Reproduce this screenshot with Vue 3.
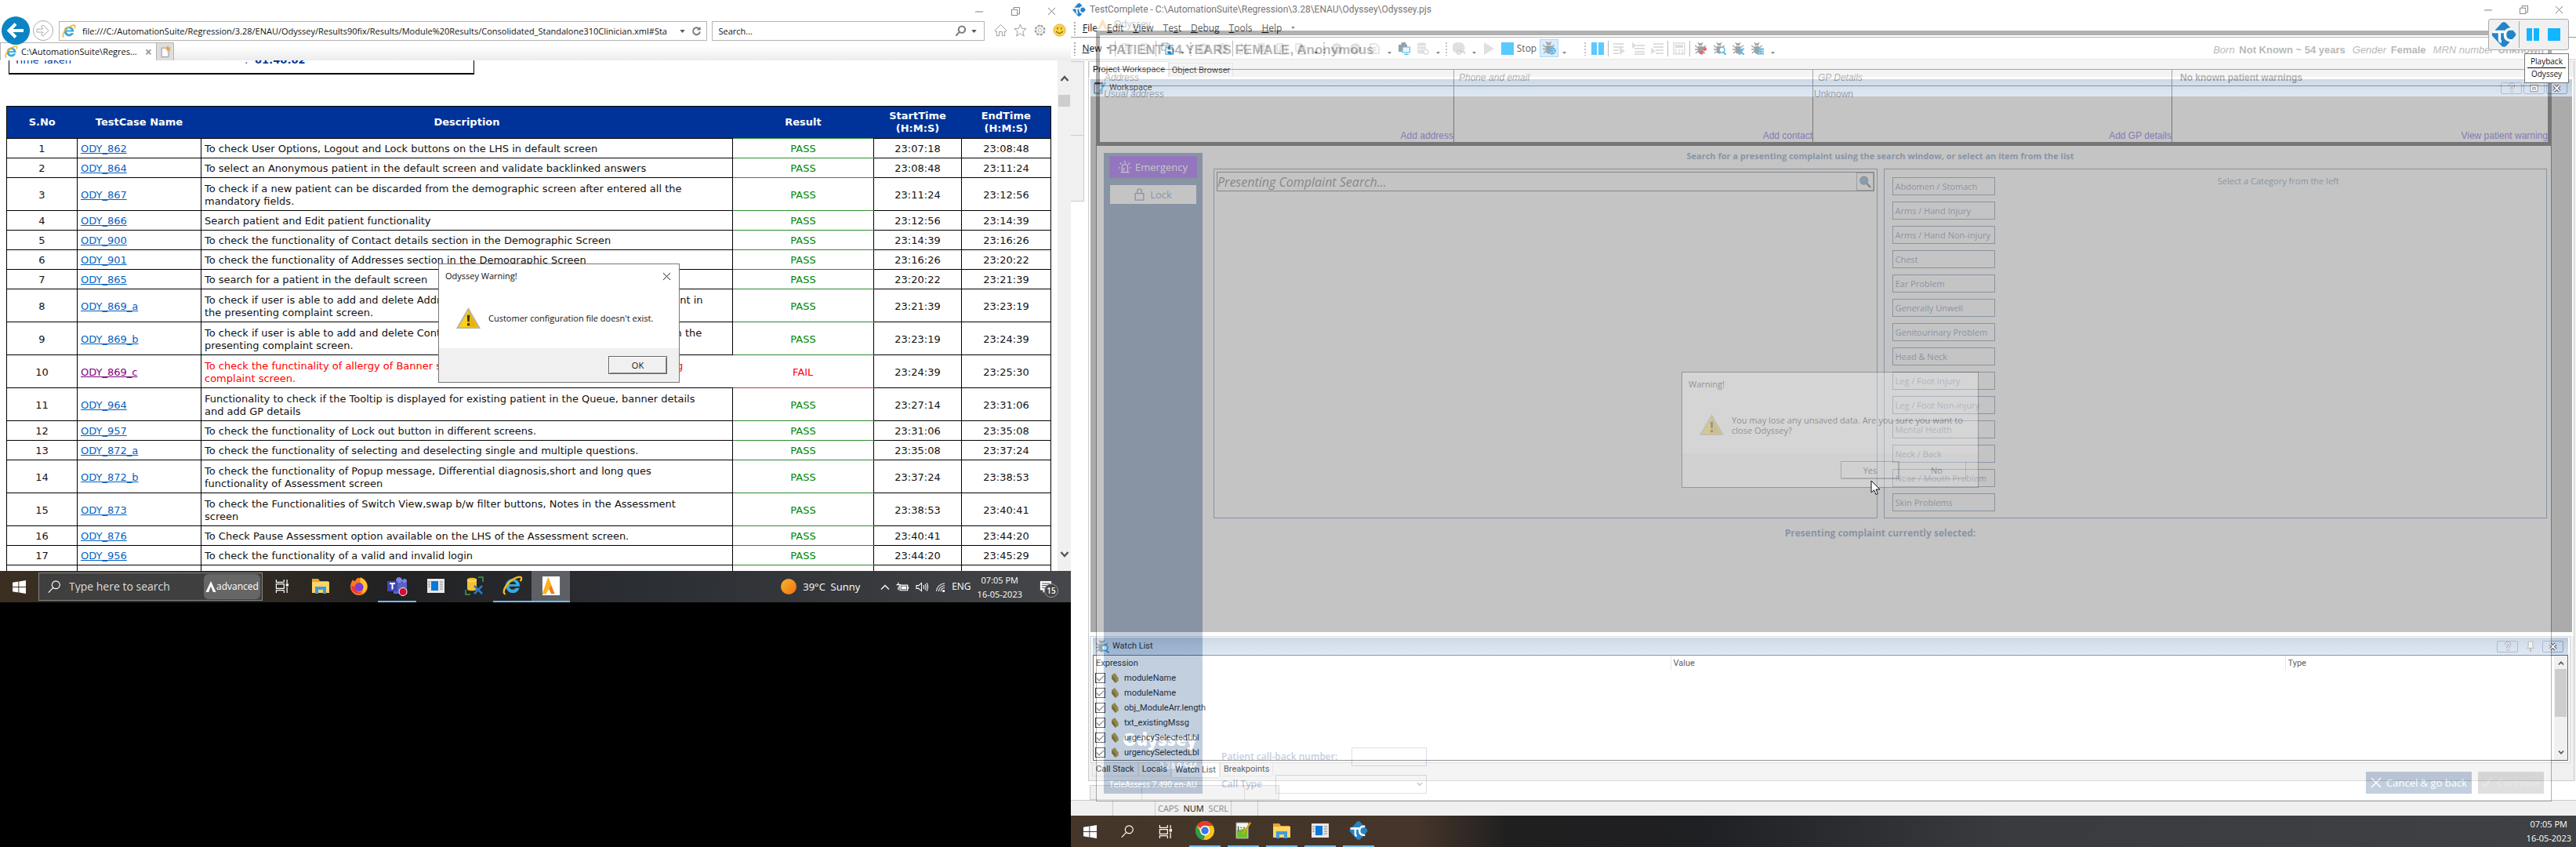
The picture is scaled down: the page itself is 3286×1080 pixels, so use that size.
<script setup>
import { h } from 'vue'

const icons = {
  min: ['0 0 12 12', ['M0 6.5H11', 'none', '#777']],
  restore: ['0 0 12 12', ['M0.5 3.5H8.5V11.5H0.5Z M3.5 3V0.5H11.5V9.5H9', 'none', '#777']],
  close: ['0 0 12 12', ['M1 1L11 11M11 1L1 11', 'none', '#777']],
  closeDark: ['0 0 12 12', ['M1 1L11 11M11 1L1 11', 'none', '#111']],
  ie: ['0 0 20 20',
    ['M10 3a7 7 0 1 0 6.7 9.2h-3.6a3.6 3.6 0 0 1-6.5-1.6H17A7 7 0 0 0 10 3zM6.7 8.4a3.4 3.4 0 0 1 6.6 0z', '#3aa9e0'],
    ['M3 18C0 18 1 12 6 7S18 0 18.5 2c.3 1-.3 2.400-1 3.500', 'none', '#f3b91c', 1.8]],
  refresh: ['0 0 14 14', ['M11 4.500A4.800 4.800 0 1 0 11.800 8', 'none', '#777', 2], ['M12.500 1V6H7.500Z', '#777']],
  lens: ['0 0 16 16', ['M9.500 1.500a4.500 4.500 0 1 0 .1 0zM6.500 9L1.500 14.500', 'none', '#777', 2]],
  lensWhite: ['0 0 20 20', ['M12.500 2a5.500 5.500 0 1 0 .1 0zM8.500 11.500L2 18.500', 'none', '#fff', 1.3]],
  lensBlue: ['0 0 20 20', ['M8.500 2.500a5.500 5.500 0 1 0 .1 0z', '#2f86c4', '#555', 1.500], ['M12.500 12L18 18', 'none', '#444', 3]],
  home: ['0 0 18 18', ['M1 9.500L9 1.500L17 9.500L15.500 11L14.500 10V16.500H11V11H7V16.500H3.500V10L2.500 11Z', '#fff', '#999']],
  star: ['0 0 18 18', ['M9 1L11.200 6.700L17 7L12.500 10.800L14 17L9 13.500L4 17L5.500 10.800L1 7L6.800 6.700Z', '#fff', '#999']],
  gear: ['0 0 18 18', ['M9 3.200a5.800 5.800 0 1 0 .1 0z', 'none', '#999', 3.200, '2.600 2'], ['M9 3.500a5.500 5.500 0 1 0 .1 0z', '#fff', '#999'], ['M9 6.500a2.500 2.500 0 1 0 .1 0z', '#fff', '#999']],
  smile: ['0 0 18 18', ['M9 1a8 8 0 1 0 .1 0z', '#fcd34a', '#e0ad2c'], ['M6.500 5V8M11.500 5V8M4.500 10.500Q9 16 13.500 10.500', 'none', '#7a5a10', 1.300]],
  newtab: ['0 0 16 18', ['M2.500 3.500H12.500V16.500H2.500Z', '#fff', '#888'], ['M12 0L13 3L16 2.500L14 5L15.500 7.500L12.500 7L11 9.500L10.500 6.500L8 5.500L10.500 4L10 1.500Z', '#f0a030']],
  up: ['0 0 12 8', ['M1.500 7L6 2L10.500 7', 'none', '#555', 2.400]],
  down: ['0 0 12 8', ['M1.500 1L6 6L10.500 1', 'none', '#555', 2.400]],
  caret: ['0 0 8 5', ['M0 0H8L4 5Z', '#555']],
  chevUp: ['0 0 12 8', ['M1 7L6 2L11 7', 'none', '#fff', 1.300]],
  warn: ['0 0 32 28', ['M16 1.500L30.500 26.500H1.500Z', '#f8d21c', '#b9b4a0', 2], ['M16 4L28 25H16Z', '#eab308'], ['M14.200 9.500H17.800L17.200 18.500H14.800ZM14.400 20.500H17.600V23.600H14.400Z', '#3c3010']],
  win: ['0 0 18 18', ['M0 2.800L7.800 1.700V8.500H0ZM8.800 1.500L18 0V8.500H8.800ZM0 9.500H7.800V16.300L0 15.200ZM8.800 9.500H18V18L8.800 16.500Z', '#fff']],
  tasks: ['0 0 18 18', ['M1.500 0V3.500H12M12 0V3.500M1.500 18V14.500H12M12 18V14.500M1.500 6H12V12H1.500ZM16 0V5M16 10V18', 'none', '#fff', 1.300], ['M14.500 5.500H18V9H14.500Z', '#fff']],
  folder: ['0 0 24 22', ['M1 2H9L11 5H22V20H1Z', '#e8a72a'], ['M1 6H23V20H1Z', '#fcd667'], ['M5 12H19V21H15V16H9V21H5Z', '#3d9ce0']],
  firefox: ['0 0 24 24', ['M12 2C18 1 23 7 23 13a11 11 0 0 1-22 0C1 9 3 6 4 4c1 2 2 2 3 2C8 3 11 1 12 2z', '#ff7a1a'], ['M14 1c5 3 9 7 8 13-1 5-4 7-7 8 4-5 3-12-2-15z', '#ffc830'], ['M12 8a5.500 5.500 0 1 0 .1 0z', '#7a40d8'], ['M2 12c0 8 8 12 14 9-5 0-10-3-9-8z', '#f0304a']],
  teams: ['0 0 26 26', ['M15 2a4 4 0 1 0 .1 0zM22 4a3 3 0 1 0 .1 0z', '#7b83eb'], ['M8 9H25V18a6 6 0 0 1-8 5H8Z', '#5a62c8'], ['M0 7H13V20H0Z', '#4048b0'], ['M3 10H10M6.500 10V17.500', 'none', '#fff', 2], ['M20 15.500a5 5 0 1 0 .1 0z', '#d01030', '#fff']],
  panel: ['0 0 22 18', ['M0 0H22V18H0Z', '#e8e8e8'], ['M5 3H14V15H5Z', '#0a78d6'], ['M1 4H4M1 7H4M1 10H4M16 4H20M16 7H20M16 10H20M16 13H20', 'none', '#888']],
  db: ['0 0 24 24', ['M3 4c0-3 12-3 12 0v12c0 3-12 3-12 0z', '#f2c230'], ['M3 4c0 3 12 3 12 0', 'none', '#fff0a0'], ['M12 12L22 22M22 12L12 22', 'none', '#2a7ac8', 2.500], ['M17 1H23V7M1 17V23H7', 'none', '#35a050', 1.500]],
  od: ['0 0 24 26', ['M0 0H24V26H0Z', '#fff'], ['M8 1L17 24H12L8 15L5 24H0Z', '#f07a1a'], ['M8 1L12 12L5 24H0Z', '#ffb020']],
  aGhost: ['0 0 16 16', ['M8 1L15 15H11L8 9L5 15H1Z', '#ff9a20']],
  advA: ['0 0 14 16', ['M7 0L14 15H10L7 7L4 15H0Z', '#fff']],
  batt: ['0 0 18 14', ['M5.500 4.500H15.500V11.500H5.500ZM3 1V5M0.500 4H5.500V6L3 8V11M16.500 6.500V9.500', 'none', '#fff', 1.300], ['M7 6H14V10H7Z', '#fff']],
  vol: ['0 0 18 14', ['M1 5H4L8 1.500V12.500L4 9H1ZM10.500 4.500Q12 7 10.500 9.500M12.800 3Q15 7 12.800 11M15 1.500Q18 7 15 12.500', 'none', '#fff', 1.100]],
  wifi: ['0 0 14 14', ['M1.500 13A12 12 0 0 1 13 2M4.500 13A9 9 0 0 1 13 5M7.500 13A6 6 0 0 1 13 8', 'none', '#ddd', 1.200], ['M10 11H13V14H10Z', '#fff']],
  note: ['0 0 18 18', ['M1 1H17V14H9L5 18V14H1Z', '#fff'], ['M3.500 4.500H14.500M3.500 7.500H14.500M3.500 10.500H11', 'none', '#333']],
  tc: ['0 0 32 32', ['M16 0Q17.500 0 19 1.500L30.500 14Q32 16 30.500 18L19 30.500Q16 33 13 30.500L1.500 18Q0 16 1.500 14L13 1.500Q14.500 0 16 0Z', '#2484c8'], ['M2 12.500H17M10.500 12.500V22Q10.500 25 13 25M27 9Q18 8 17.500 16T27 24', 'none', '#fff', 3.400]],
  chrome: ['0 0 24 24', ['M12 0a12 12 0 1 0 .1 0z', '#f9c51e'], ['M12 0A12 12 0 0 1 22.400 6H12L6.800 9L1.600 6A12 12 0 0 1 12 0z', '#e33b2e'], ['M1.600 6L7 15L12 18L10.500 24A12 12 0 0 1 1.600 6z', '#2f9e4a'], ['M12 6.500a5.500 5.500 0 1 0 .1 0z', '#3b78e7', '#fff', 1.500]],
  npp: ['0 0 22 24', ['M1 1H18V23H1Z', '#f4f6ee', '#777'], ['M2 12L17 8V22H2Z', '#6cc224'], ['M4 6V13M7 8H9M11 8H13', 'none', '#555', 1.500], ['M21 1L10 17', 'none', '#e0a020', 2.500]],
  siren: ['0 0 18 18', ['M3 16.500H15M5 16V9a4 4 0 0 1 8 0V16M9 0V3M2 3L4 5M16 3L14 5M0 10H2M16 10H18M7.500 14V10', 'none', '#fff', 1.500]],
  lock: ['0 0 14 18', ['M1 7.500H13V17H1ZM4 7V4a3 3 0 0 1 6 0V7', 'none', '#3a6297', 1.500]],
  workspace: ['0 0 16 16', ['M1 3H11V15H1Z', 'none', '#555'], ['M1 1H12V3H1Z', '#444'], ['M15 1L8 13', 'none', '#1f9be0', 2.200]],
  tag: ['0 0 10 14', ['M1 3L5 0L10 7V11L6 14L1 8Z', '#b8982a'], ['M1 3L6 9V14L1 8Z', '#8d7014']],
  pin: ['0 0 12 16', ['M3 1H9V8L11 10H1L3 8Z', '#eee', '#999'], ['M6 10V15', 'none', '#999', 2]],
  help: ['0 0 12 16', ['M3 5Q3 2 6 2T9 5Q9 7 6 8.500V10.500M6 12.500V14.500', 'none', '#667', 3.600], ['M3 5Q3 2 6 2T9 5Q9 7 6 8.500V10.500M6 12.500V14.500', 'none', '#fff', 1.500]],
  box: ['0 0 12 12', ['M1 1.500H11V10.500H1ZM4 5H8V7.500H4Z', '#fff', '#778', 1.200]],
  xb: ['0 0 12 12', ['M2 2L10 10M10 2L2 10', 'none', '#556', 4.200], ['M2 2L10 10M10 2L2 10', 'none', '#fff', 2]],
  x: ['0 0 14 14', ['M1 1L13 13M13 1L1 13', 'none', '#fff', 1.600]],
  tick: ['0 0 14 14', ['M1 8L5 12L13 1', 'none', '#bbb', 1.600]],
  cursor: ['0 0 13 20', ['M1 1V16L4.500 12.800L7 18.500L9.500 17.500L7 12H12Z', '#fff', '#111']],
  back: ['0 0 36 36', ['M18 0a18 18 0 1 0 .1 0z', '#0a84c4'], ['M28 18H10M18 9.500L9.500 18L18 26.500', 'none', '#fff', 4]],
  fwd: ['0 0 26 26', ['M13 .5a12.500 12.500 0 1 0 .1 0z', '#fff', '#aaa'], ['M5 11H13L10.500 7.500L13 6L20 13L13 20L10.500 18.500L13 15H5Z', '#fff', '#aaa']],
  save: ['0 0 16 16', ['M1 1H9L11 3V10H1ZM3 1V4H8V1', '#fff', '#777'], ['M6 6H14L15.500 7.500V15.500H6Z', '#fff', '#1f9be0', 1.500], ['M8 11H13V15H8ZM8 6H12V8.500H8Z', '#1f9be0']],
  shape: ['0 0 16 16', ['M3 2H10L14 6V14H3ZM6 7H11M6 10H11', 'none', '#cfcfcf', 1.500]],
  disc: ['0 0 16 16', ['M8 1a7 7 0 1 0 .1 0z', '#d6d6d6'], ['M8 5a3 3 0 1 0 .1 0z', '#f3f3f3']],
  cut: ['0 0 16 16', ['M4 1L10 11M11 1L5 11M4 11a2 2 0 1 0 .1 0zM11 11a2 2 0 1 0 .1 0z', 'none', '#cfcfcf', 1.500]],
  copy: ['0 0 16 16', ['M2 2H9V11H2ZM6 5H14V15H6Z', '#fff', '#cfcfcf', 1.500]],
  shot: ['0 0 16 16', ['M1 3H4L5 0H10L11 3H12V12H1Z', '#777'], ['M6 6H15.500V13H6ZM8 15.500H14M11 13V15', '#dff2ff', '#1f9be0', 1.200]],
  dbg: ['0 0 16 16', ['M1 2C1 0 12 0 12 2V13C12 15 1 15 1 13Z', '#d3d3d3'], ['M0 5H13M0 9H13', 'none', '#fff'], ['M12 9a3 3 0 1 0 .1 0z', '#fff', '#ccc', 1.500]],
  play: ['0 0 16 16', ['M2 0L15 8L2 16Z', '#d3d3d3']],
  rec: ['0 0 16 16', ['M8 0a7 7 0 0 0-5 13H12A7 7 0 0 0 8 0z', '#d3d3d3'], ['M8 10a2.500 2.500 0 1 0 .1 0zM11 12.500H16V15', 'none', '#bbb', 1.500]],
  stop: ['0 0 16 16', ['M0 0H16V16H0Z', '#12b5ff']],
  pause: ['0 0 16 16', ['M0 0H7V16H0ZM9 0H16V16H9Z', '#12b5ff']],
  stepA: ['0 0 16 16', ['M0 2H13M0 6H13M0 10H7M0 14H7', 'none', '#d0d0d0', 2], ['M8 6L15 11L8 16Z', '#d0d0d0']],
  stepB: ['0 0 16 16', ['M6 4H16M3 8H16M3 12H16M3 15H16', 'none', '#d0d0d0', 2], ['M0 0L6 4L0 8Z', '#d0d0d0']],
  stepC: ['0 0 16 16', ['M3 2H16M3 6H16M6 10H16M6 14H16', 'none', '#d0d0d0', 2], ['M0 7L6 11L0 15Z', '#d0d0d0']],
  calc: ['0 0 16 16', ['M1 1H15V15H1Z', '#fff', '#cfcfcf', 1.500], ['M3 3H13V7H3ZM3 9H5V11H3ZM7 9H9V11H7ZM11 9H13V11H11ZM3 12H5V14H3ZM7 12H9V14H7ZM11 12H13V14H11Z', '#cfcfcf']]
}
const bug = [['M4 5H10V13Q7 16 4 13ZM4.500 4Q4.500 1 7 1T9.500 4Z', '#777'], ['M0 4L4 7M0 9H14M1 14L4 11M14 4L10 7M10 11L13 14M4 0L5 2M10 0L9 2', 'none', '#777', 1.300]]
icons.bugRed = ['0 0 16 16', ...bug, ['M12.500 6a2.500 2.500 0 1 0 .1 0zM8.500 10.500a2.500 2.500 0 1 0 .1 0z', '#d8283c']]
icons.bugLens = ['0 0 16 16', ...bug, ['M10.500 6a3.500 3.500 0 1 0 .1 0z', '#fff', '#1f9be0', 1.500], ['M13 13L16 16', 'none', '#1f9be0', 2]]
icons.bugX = ['0 0 16 16', ...bug, ['M8 8Q10 7 11 11T15 15M15 8Q12 9 11.500 12T8 15', 'none', '#1f9be0', 1.800]]
icons.bugList = ['0 0 16 16', ...bug, ['M7 8.500H16M7 11.500H16M7 14.500H16', 'none', '#1f9be0', 2]]
icons.bugAim = ['0 0 16 16', ...bug, ['M11 7a4 4 0 1 0 .1 0zM11 5V16M5.500 11H16', 'none', '#1f9be0', 1.300]]

const Ico = (p) => {
  const [box, ...shapes] = icons[p.n]
  return h('svg', { viewBox: box, width: p.w, height: p.h || p.w, 'aria-hidden': 'true', class: 'ico' },
    shapes.map(([d, fill, stroke, sw, dash]) => h('path', { d, fill, stroke, 'stroke-width': sw || 1, 'stroke-dasharray': dash })))
}
Ico.props = ['n', 'w', 'h']

const tests = [
  ['ODY_862', ['To check User Options, Logout and Lock buttons on the LHS in default screen'], '23:07:18', '23:08:48'],
  ['ODY_864', ['To select an Anonymous patient in the default screen and validate backlinked answers'], '23:08:48', '23:11:24'],
  ['ODY_867', ['To check if a new patient can be discarded from the demographic screen after entered all the', 'mandatory fields.'], '23:11:24', '23:12:56'],
  ['ODY_866', ['Search patient and Edit patient functionality'], '23:12:56', '23:14:39'],
  ['ODY_900', ['To check the functionality of Contact details section in the Demographic Screen'], '23:14:39', '23:16:26'],
  ['ODY_901', ['To check the functionality of Addresses section in the Demographic Screen'], '23:16:26', '23:20:22'],
  ['ODY_865', ['To search for a patient in the default screen'], '23:20:22', '23:21:39'],
  ['ODY_869_a', ['To check if user is able to add and delete Address of the Banner section for the existing patient in', 'the presenting complaint screen.'], '23:21:39', '23:23:19'],
  ['ODY_869_b', ['To check if user is able to add and delete Contact of Banner section for the existing patient in the', 'presenting complaint screen.'], '23:23:19', '23:24:39'],
  ['ODY_869_c', ['To check the functinality of allergy of Banner section for the existing patient in the presenting', 'complaint screen.'], '23:24:39', '23:25:30', 'FAIL'],
  ['ODY_964', ['Functionality to check if the Tooltip is displayed for existing patient in the Queue, banner details', 'and add GP details'], '23:27:14', '23:31:06'],
  ['ODY_957', ['To check the functionality of Lock out button in different screens.'], '23:31:06', '23:35:08'],
  ['ODY_872_a', ['To check the functionality of selecting and deselecting single and multiple questions.'], '23:35:08', '23:37:24'],
  ['ODY_872_b', ['To check the functionality of Popup message, Differential diagnosis,short and long ques', 'functionality of Assessment screen'], '23:37:24', '23:38:53'],
  ['ODY_873', ['To check the Functionalities of Switch View,swap b/w filter buttons, Notes in the Assessment', 'screen'], '23:38:53', '23:40:41'],
  ['ODY_876', ['To Check Pause Assessment option available on the LHS of the Assessment screen.'], '23:40:41', '23:44:20'],
  ['ODY_956', ['To check the functionality of a valid and invalid login'], '23:44:20', '23:45:29'],
  ['ODY_878', ['To check the functionalities of the tab on Summary'], '23:45:29', '23:47:36']
]
const menus = ['File', 'Edit', 'View', 'Test', 'Debug', 'Tools', 'Help']
const toolsA = ['|', 'shape', 'shape', '|', 'save', 'v', ':', 'disc', 'disc', '|', 'cut', 'copy', 'copy', 'copy', 'v', ':', 'disc', 'disc', 'shape', 'v', 'shot', 'dbg', 'v', ':', 'rec', 'v', 'play']
const toolsB = ['pause', '|', 'stepA', 'stepB', 'stepC', '|', 'calc', '|', 'bugRed', 'bugLens', 'bugX', 'bugList', 'v']
const categories = ['Abdomen / Stomach', 'Arms / Hand Injury', 'Arms / Hand Non-injury', 'Chest', 'Ear Problem', 'Generally Unwell', 'Genitourinary Problem', 'Head & Neck', 'Leg / Foot Injury', 'Leg / Foot Non-injury', 'Mental Health', 'Neck / Back', 'Nose / Mouth Problem', 'Skin Problems']
const watches = ['moduleName', 'moduleName', 'obj_ModuleArr.length', 'txt_existingMssg', 'urgencySelectedLbl', 'urgencySelectedLbl']
const banner = [
  ['Address', 'Usual address', 'Add address'],
  ['Phone and email', '', 'Add contact'],
  ['GP Details', 'Unknown', 'Add GP details'],
  ['No known patient warnings', '', 'View patient warning']
]
const leftApps = [['folder', 24], ['firefox', 24], ['teams', 26, 1], ['panel', 22], ['db', 24], ['ie', 26, 1], ['od', 24, 2]]
const rightApps = [['chrome', 24], ['npp', 22], ['folder', 24], ['panel', 22], ['tc', 24]]
</script>

<template>
  <div class="screens">
    <section class="left">
      <div class="desk1">
        <div class="ie-title">
          <button aria-label="Minimize"><Ico n="min" w="11" /></button>
          <button aria-label="Restore"><Ico n="restore" w="11" /></button>
          <button aria-label="Close"><Ico n="close" w="11" /></button>
        </div>
        <div class="ie-bar">
          <button class="back" aria-label="Back"><Ico n="back" w="36" /></button>
          <button class="fwd" aria-label="Forward"><Ico n="fwd" w="26" /></button>
          <div class="field addr">
            <Ico n="ie" w="18" />
            <input aria-label="Address" value="file:///C:/AutomationSuite/Regression/3.28/ENAU/Odyssey/Results90fix/Results/Module%20Results/Consolidated_Standalone310Clinician.xml#Sta" />
            <Ico n="caret" w="7" h="4" /><Ico n="refresh" w="13" />
          </div>
          <div class="field find">
            <input aria-label="Search" value="Search..." />
            <Ico n="lens" w="15" /><Ico n="caret" w="7" h="4" />
          </div>
          <div class="ie-icons"><Ico n="home" w="17" /><Ico n="star" w="17" /><Ico n="gear" w="17" /><Ico n="smile" w="17" /></div>
        </div>
        <div class="ie-tabs">
          <div class="tab"><Ico n="ie" w="17" /><span>C:\AutomationSuite\Regres...</span><button aria-label="Close tab">×</button></div>
          <button class="newtab" aria-label="New tab"><Ico n="newtab" w="14" h="16" /></button>
        </div>
        <div class="page">
          <div class="doc">
            <div class="taken"><span>Time Taken</span><span>:</span><b>01:40:02</b></div>
            <table class="report">
              <colgroup><col class="c1"><col class="c2"><col class="c3"><col class="c4"><col class="c5"><col class="c6"></colgroup>
              <thead>
                <tr><th>S.No</th><th>TestCase Name</th><th>Description</th><th>Result</th><th>StartTime<br>(H:M:S)</th><th>EndTime<br>(H:M:S)</th></tr>
              </thead>
              <tbody>
                <tr v-for="(t, i) in tests" :key="t[0]" :class="{ two: t[1].length > 1, fail: t[4] }">
                  <td>{{ i + 1 }}</td>
                  <td class="name"><a href="#">{{ t[0] }}</a></td>
                  <td class="desc"><div v-for="l in t[1]" :key="l">{{ l }}</div></td>
                  <td class="res">{{ t[4] || 'PASS' }}</td>
                  <td>{{ t[2] }}</td>
                  <td>{{ t[3] }}</td>
                </tr>
              </tbody>
            </table>
          </div>
          <div class="scroll"><Ico n="up" w="12" h="10" /><i></i><Ico n="down" w="12" h="10" /></div>
        </div>
        <div class="task task1">
          <button class="start" aria-label="Start"><Ico n="win" w="17" /></button>
          <div class="search"><Ico n="lensWhite" w="18" /><input aria-label="Type here to search" value="Type here to search" /><span class="adv"><Ico n="advA" w="14" h="15" />advanced</span></div>
          <button class="app" aria-label="Task view"><Ico n="tasks" w="17" /></button>
          <button v-for="a in leftApps" :key="a[0]" class="app" :class="{ run: a[2], active: a[2] === 2 }" :aria-label="a[0]"><Ico :n="a[0]" :w="a[1]" /></button>
          <div class="tray">
            <i class="sun"></i><span class="temp">39°C&nbsp;&nbsp;Sunny</span>
            <Ico n="chevUp" w="12" h="9" /><Ico n="batt" w="17" /><Ico n="vol" w="17" /><Ico n="wifi" w="13" />
            <span>ENG</span>
            <div class="clock">07:05 PM<br>16-05-2023</div>
            <div class="note"><Ico n="note" w="16" /><b>15</b></div>
          </div>
        </div>

        <div class="dialog" role="dialog">
          <div class="d-title">Odyssey Warning!<button aria-label="Close dialog"><Ico n="closeDark" w="11" /></button></div>
          <div class="d-body"><Ico n="warn" w="31" h="28" /><span>Customer configuration file doesn't exist.</span></div>
          <div class="d-foot"><button class="ok">OK</button></div>
        </div>
      </div>
    </section>

    <section class="right">
      <div class="tc-title">
        <Ico n="tc" w="17" /><span>TestComplete - C:\AutomationSuite\Regression\3.28\ENAU\Odyssey\Odyssey.pjs</span>
        <button aria-label="Minimize"><Ico n="min" w="11" /></button>
        <button aria-label="Restore"><Ico n="restore" w="11" /></button>
        <button aria-label="Close"><Ico n="close" w="11" /></button>
      </div>
      <div class="tc-menu">
        <i class="grip"></i>
        <button v-for="m in menus" :key="m"><template v-if="m === 'Test'">Te<u>s</u>t</template><template v-else><u>{{ m[0] }}</u>{{ m.slice(1) }}</template></button>
        <Ico n="caret" w="5" h="3" />
      </div>
      <div class="tc-tools">
        <i class="grip"></i>
        <button class="new"><span><u>N</u>ew</span><Ico n="caret" w="5" h="3" /></button>
        <template v-for="(t, i) in toolsA" :key="i">
          <i v-if="t === '|'" class="sep"></i><i v-else-if="t === ':'" class="grip"></i>
          <span v-else-if="t === 'v'" class="arr"><Ico n="caret" w="5" h="3" /></span>
          <button v-else class="tool" :aria-label="t"><Ico :n="t" w="16" /></button>
        </template>
        <button class="stopb"><Ico n="stop" w="16" />Stop</button>
        <button class="tool on" aria-label="Debug mode"><Ico n="bugAim" w="17" /></button>
        <span class="arr wide"><Ico n="caret" w="5" h="3" /></span>
        <i class="grip"></i>
        <template v-for="(t, i) in toolsB" :key="i">
          <i v-if="t === '|'" class="sep"></i>
          <span v-else-if="t === 'v'" class="arr"><Ico n="caret" w="5" h="3" /></span>
          <button v-else class="tool" :aria-label="t"><Ico :n="t" w="16" /></button>
        </template>
      </div>
      <div class="tc-main">
        <div class="strip"><i></i><i></i></div>
        <div class="work">
          <div class="toptabs"><button class="sel">Project Workspace</button><button>Object Browser</button></div>
          <div class="ws">
            <div class="bar"><Ico n="workspace" w="16" /><span>Workspace</span>
              <button aria-label="Help"><Ico n="help" w="10" h="13" /></button><button aria-label="Maximize"><Ico n="box" w="11" /></button><button aria-label="Close workspace"><Ico n="xb" w="11" /></button></div>
            <div class="canvas"></div>
          </div>
          <div class="watch">
            <div class="bar"><Ico n="bugLens" w="17" /><span>Watch List</span>
              <button aria-label="Help"><Ico n="help" w="10" h="13" /></button><button class="flat" aria-label="Pin"><Ico n="pin" w="12" h="15" /></button><button aria-label="Close list"><Ico n="xb" w="11" /></button></div>
            <div class="list">
              <table>
                <colgroup><col class="w1"><col class="w2"><col></colgroup>
                <thead><tr><th>Expression</th><th>Value</th><th>Type</th></tr></thead>
                <tbody>
                  <tr v-for="(w, i) in watches" :key="i"><td><label><input type="checkbox" checked /><Ico n="tag" w="10" h="13" />{{ w }}</label></td><td></td><td></td></tr>
                </tbody>
              </table>
              <div class="scroll small"><Ico n="up" w="8" h="7" /><i></i><Ico n="down" w="8" h="7" /></div>
            </div>
          </div>
          <div class="lowtabs"><button>Call Stack</button><button>Locals</button><button class="sel">Watch List</button><button>Breakpoints</button></div>
        </div>
      </div>
      <div class="docks"><i></i><i></i><i></i></div>
      <div class="status"><i class="s1"></i><i class="s2"></i><span class="s3">CAPS <b>NUM</b> SCRL</span><i class="s4"></i></div>
      <div class="task task2">
        <button class="sys" aria-label="Start"><Ico n="win" w="17" /></button>
        <button class="sys" aria-label="Find"><Ico n="lensWhite" w="18" /></button>
        <button class="sys" aria-label="Task view"><Ico n="tasks" w="17" /></button>
        <button v-for="a in rightApps" :key="a[0]" class="app run" :aria-label="a[0]"><Ico :n="a[0]" :w="a[1]" /></button>
        <div class="clock">07:05 PM<br>16-05-2023</div>
      </div>

      <div class="ody">
        <div class="o-title"><Ico n="aGhost" w="15" />Odyssey</div>
        <div class="o-banner">
          <div class="o-patient"><h1>PATIENT 54 YEARS FEMALE, Anonymous</h1>
            <p><i>Born</i> <b>Not Known ~ 54 years</b></p><p><i>Gender</i> <b>Female</b></p><p><i>MRN number</i> <b>Unknown</b></p></div>
          <div class="o-cards">
            <div v-for="b in banner" :key="b[0]"><span class="lbl">{{ b[0] }}</span><span class="val">{{ b[1] }}</span><a href="#">{{ b[2] }}</a></div>
          </div>
        </div>
        <div class="o-body">
          <aside>
            <button class="emg"><Ico n="siren" w="16" />Emergency</button>
            <button class="lock"><Ico n="lock" w="13" h="16" />Lock</button>
            <div class="ver"><strong>Odyssey</strong><span>3.28.0.544</span><span>TeleAssess 7.490 en-AU</span></div>
          </aside>
          <main>
            <h2 class="hint">Search for a presenting complaint using the search window, or select an item from the list</h2>
            <div class="panels">
              <div class="panel">
                <div class="pc"><input aria-label="Presenting Complaint Search" value="Presenting Complaint Search..." /><button aria-label="Search"><Ico n="lensBlue" w="18" /></button></div>
              </div>
              <div class="panel cats">
                <div class="catlist"><button v-for="c in categories" :key="c">{{ c }}</button></div>
                <p>Select a Category from the left</p>
              </div>
            </div>
            <h2 class="cur">Presenting complaint currently selected:</h2>
            <div class="o-foot">
              <div class="form">
                <div><label for="cb">Patient call-back number:</label><input id="cb" /></div>
                <div><label for="ct">Call Type</label><span class="pick"><select id="ct"><option></option></select><Ico n="down" w="8" h="6" /></span></div>
              </div>
              <button class="cancel"><Ico n="x" w="14" />Cancel &amp; go back</button>
              <button class="cont"><Ico n="tick" w="14" />Continue</button>
            </div>
          </main>
        </div>
      </div>

      <div class="dialog ask" role="dialog">
        <div class="d-title">Warning!</div>
        <div class="d-body"><Ico n="warn" w="31" h="28" /><span>You may lose any unsaved data. Are you sure you want to close Odyssey?</span></div>
        <div class="d-foot"><button class="ok">Yes</button><button>No</button></div>
      </div>
      <div class="cursor"><Ico n="cursor" w="13" h="20" /></div>

      <div class="player">
        <div class="pbox"><Ico n="tc" w="32" /><i></i><button aria-label="Pause"><Ico n="pause" w="16" /></button><button aria-label="Stop playback"><Ico n="stop" w="16" /></button></div>
        <div class="ptip"><span>Playback</span><span>Odyssey</span></div>
      </div>
    </section>
  </div>
</template>

<style>
body { background: #000; }
.ico { display: block; flex: none; }
</style>

<style scoped>
* { box-sizing: border-box; }
.screens { display: grid; grid-template-columns: 1366fr 1920fr; min-height: 100vh; background: #000; font: 12px/16px "Open Sans", "Noto Sans", sans-serif; color: #111; overflow: hidden; }
button { border: 0; padding: 0; margin: 0; background: none; font: inherit; color: inherit; display: inline-flex; align-items: center; justify-content: center; white-space: nowrap; }
input, select { font: inherit; color: inherit; border: 0; padding: 0; margin: 0; background: none; min-width: 0; outline: 0; }
h1, h2, p { margin: 0; }
i { font-style: normal; }
.left, .right { min-width: 0; }
.desk1 { position: relative; aspect-ratio: 1366 / 768; display: flex; flex-direction: column; background: #fff; overflow: hidden; }

.ie-title { height: 27px; display: flex; justify-content: flex-end; padding: 2px 2px 0 0; flex: none; }
.ie-title button { width: 46px; }
.ie-bar { height: 27px; display: flex; flex: none; padding-left: 2px; }
.back, .fwd { flex: none; height: 24px; }
.back { width: 36px; z-index: 1; }
.fwd { width: 26px; margin: 0 7px 0 4px; }
.field { height: 25px; border: 1px solid #b5b5b5; display: flex; align-items: center; gap: 8px; font-size: 11px; }
.addr { flex: 840; padding: 0 6px 0 3px; }
.addr input { flex: 1; }
.find { flex: 339; margin-left: 6px; padding: 0 9px 0 7px; gap: 6px; }
.find input { flex: 1; }
.ie-icons { display: flex; gap: 8px; padding: 3px 6px 0 12px; }
.ie-tabs { height: 23px; flex: none; display: flex; background: linear-gradient(#fff 20%, #ececec); }
.tab { width: 200px; border: 1px solid #b5b5b5; border-width: 1px 1px 0; background: #fff; display: flex; align-items: center; padding: 0 5px; gap: 4px; }
.tab span { flex: 1; font-size: 11px; white-space: nowrap; }
.tab button { font-size: 16px; font-weight: 700; color: #999; }
.newtab { width: 22px; background: #ddd; border: 1px solid #b5b5b5; border-width: 1px 1px 0 0; }
.page { flex: 1; min-height: 0; display: flex; overflow: hidden; font: 13px/16px "DejaVu Sans", sans-serif; }
.doc { flex: 1; padding: 0 8px; min-width: 0; overflow: hidden; }
.taken { height: 18px; width: 594px; margin: 0 0 40px 3px; border: solid #000; border-width: 0 1px 2px; color: #039; display: grid; grid-template-columns: 294px 13px 1fr; padding: 0 0 8px 6px; overflow: hidden; align-content: end; }
.report { width: 100%; border-collapse: collapse; table-layout: fixed; }
.c1 { width: 90px; } .c2 { width: 158px; } .c4 { width: 180px; } .c5 { width: 112px; } .c6 { width: 114px; }
.report th { background: #039; color: #fff; height: 41px; padding: 4px; font-weight: 700; border: 0; }
.report thead { border: 1px solid #000; }
.report td { height: 25px; padding: 5px 4px 3px; text-align: center; border: 1px solid #000; white-space: nowrap; }
.report .two td { height: 42px; }
.report td.name, .report td.desc { text-align: left; }
.report td.res { color: #080; border-top-color: #2f8a2f; border-bottom-color: #2f8a2f; }
.report .fail td.desc, .report .fail td.res { color: #f00; }
.report .fail td.desc { border-right: 0; }
.report .fail td.res { border-left: 0; border-bottom-color: #c33; }
.report a { color: #0563c1; }
.report .fail a { color: #800080; }
.scroll { width: 17px; flex: none; background: #f0f0f0; display: flex; flex-direction: column; align-items: center; padding: 18px 0 16px; }
.scroll i { width: 15px; height: 15px; background: #cdcdcd; margin: 16px 0 auto; }

.task { height: 40px; flex: none; display: flex; align-items: stretch; color: #fff; }
.task1 { background: linear-gradient(90deg, #3b2f22, #2d2822 28%, #222224 36%, #2b2e33 60%, #3a3c3f 85%, #45474a); }
.start { width: 49px; }
.search { width: 286px; background: #3f3f3f; border: 1px solid #858585; margin: 2px 0; display: flex; align-items: center; padding: 0 2px 0 10px; font-size: 14px; gap: 10px; color: #ddd; }
.search input { flex: 1; width: 0; }
.adv { background: #666; border-radius: 6px; width: 72px; height: 32px; display: flex; align-items: center; justify-content: center; font-size: 12px; color: #fff; }
.app { width: 49px; border-bottom: 2px solid transparent; }
.app.run { border-bottom-color: #76b9ed; background-clip: padding-box; }
.app.active { background-color: #5d6165; }
.tray { margin-left: auto; display: flex; align-items: center; gap: 8px; padding-right: 16px; font-size: 12px; }
.sun { width: 20px; height: 20px; border-radius: 50%; background: linear-gradient(135deg, #f8b62c, #f07010); }
.temp { font-size: 13px; margin-right: 18px; }
.clock { text-align: center; line-height: 18px; font-size: 11px; padding-top: 2px; }
.note { position: relative; margin-left: 14px; padding-right: 8px; }
.note b { position: absolute; left: 6px; top: 4px; font-size: 10px; font-weight: 600; width: 18px; height: 18px; line-height: 16px; text-align: center; border-radius: 50%; background: #444; border: 1px solid #999; }

.dialog { position: absolute; display: flex; flex-direction: column; background: #fff; border: 1px solid #777; font-size: 11px; left: 559px; top: 336px; width: 308px; height: 152px; }
.d-title { height: 30px; flex: none; display: flex; justify-content: space-between; align-items: center; padding: 0 10px 0 8px; }
.d-body { flex: 1; display: flex; align-items: center; padding: 0 20px 0 22px; gap: 10px; }
.d-foot { height: 43px; flex: none; background: #f0f0f0; display: flex; justify-content: flex-end; align-items: center; padding-right: 15px; gap: 10px; }
.dialog .d-foot button { width: 75px; height: 23px; border: 1px solid #999; border-color: #eee #999 #999 #eee; }
.dialog .d-foot .ok { border: 1px solid #666; box-shadow: inset 1px 1px #fff, inset -1px -1px #888; }

.right { position: relative; aspect-ratio: 1920 / 1080; background: #fff; display: flex; flex-direction: column; overflow: hidden; }
.tc-title { height: 24px; flex: none; display: flex; align-items: center; padding: 0 2px; color: #888; gap: 5px; }
.tc-title span { flex: 1; color: #777; font-family: Roboto, sans-serif; }
.tc-title button { width: 40px; }
.tc-menu { height: 23px; flex: none; display: flex; align-items: center; gap: 12px; color: #111; padding-left: 1px; }
.tc-menu .grip { margin-right: -6px; }
.grip { width: 8px; height: 18px; flex: none; background: radial-gradient(circle, #aaa 1px, transparent 1px) 0 0 / 8px 4px; }
.tc-tools { height: 29px; flex: none; border: 1px solid #ddd; border-width: 1px 0; border-top-color: #999; display: flex; align-items: center; padding-left: 1px; }
.new { width: 46px; gap: 5px; }
.sep { width: 4px; height: 20px; flex: none; background: linear-gradient(90deg, transparent 1px, #999 1px 2px, transparent 2px); }
.tool { width: 24px; height: 23px; flex: none; }
.tool.on { background: #cbe6fb; border: 1px solid #8ec8f4; }
.arr { width: 14px; height: 14px; display: flex; align-items: flex-end; justify-content: center; flex: none; }
.arr.wide { margin-right: 16px; }
.stopb { width: 53px; gap: 4px; }
.tc-main { flex: 1; min-height: 0; display: flex; gap: 5px; background: #f0f0f0; padding: 2px 2px 0 0; }
.strip { width: 17px; flex: none; background: #fff; border-top: 1px solid #ccc; box-shadow: 5px 0 #fff; }
.strip i { display: block; background: #f0f0f0; border: 1px solid #ccc; border-width: 0 1px 1px 0; height: 94px; }
.strip i + i { height: 84px; }
.work { flex: 1; min-width: 0; display: flex; flex-direction: column; border: 1px solid #ccc; border-width: 0 1px 1px; font: 11px/14px Roboto, sans-serif; }
.toptabs { height: 20px; flex: none; display: flex; align-items: flex-end; }
.toptabs button { height: 18px; width: 82px; border: 1px solid #ddd; border-bottom: 0; }
.toptabs .sel { height: 20px; width: 102px; background: #fff; }
.ws { flex: 1; display: flex; flex-direction: column; border: solid #fff; border-width: 3px 2px 5px; }
.bar { height: 22px; flex: none; display: flex; align-items: center; gap: 2px; padding: 0 6px 0 4px; background: linear-gradient(#bacadb, #d1dfef); }
.bar span { flex: 1; padding-left: 2px; }
.bar button { width: 27px; height: 15px; border: 1px solid #8ba0bf; border-radius: 2px; }
.bar .flat { border: 0; }
.canvas { flex: 1; background: #ababab; }
.watch { flex: none; height: 162px; background: #fff; border: 1px solid #d5d5d5; margin: 0 4px 0 2px; padding: 1px 2px 2px; display: flex; flex-direction: column; }
.list { flex: 1; min-height: 0; border: 1px solid #666; display: flex; overflow: hidden; }
.list table { flex: 1; border-collapse: collapse; table-layout: fixed; }
.w1 { width: 736px; } .w2 { width: 784px; }
.list th, .list td { height: 19px; padding: 0 3px; text-align: left; font-weight: 400; }
.list td { padding-left: 2px; }
.list th + th { border-left: 1px solid #ddd; }
.list label { display: flex; align-items: center; gap: 7px; height: 19px; }
.list input { appearance: none; width: 13px; height: 13px; border: 1px solid #333; flex: none; background: #fff; display: grid; place-items: center; }
.list input::before { content: ""; width: 8px; height: 4px; border: solid #333; border-width: 0 0 1px 1px; transform: rotate(-45deg); margin-bottom: 2px; }
.scroll.small { padding: 6px 0; }
.scroll.small i { height: 61px; margin: 4px 0 auto; }
.lowtabs { height: 22px; flex: none; display: flex; align-items: flex-start; padding-left: 4px; }
.lowtabs button { height: 17px; padding: 0 4px; border: 1px solid #ddd; border-top: 0; }
.lowtabs .sel { height: 19px; background: #fff; width: 62px; }
.docks { height: 24px; flex: none; padding: 5px 0 0 24px; display: flex; }
.docks i { background: #f0f0f0; border: 1px solid #ccc; width: 67px; margin-right: -1px; }
.docks i + i { width: 132px; }
.docks i + i + i { width: 45px; }
.status { height: 20px; flex: none; border-top: 1px solid #ccc; background: #f0f0f0; display: flex; line-height: 20px; font-size: 11px; color: #888; }
.status > * { border-right: 1px solid #ccc; }
.s1 { width: 54px; } .s2 { width: 54px; } .s3 { width: 97px; display: flex; justify-content: space-around; } .s4 { width: 34px; }
.s3 b { color: #111; font-weight: 400; }
.task2 { background: linear-gradient(90deg, #443629, #45352a 23%, #201f20 29%, #1f2023 42%, #393b3f 62%, #3f4144); }
.sys { width: 48px; }
.sys:nth-child(3) { margin-right: 7px; }
.task2 .app { width: 40px; margin-right: 9px; }
.task2 .clock { margin-left: auto; padding-right: 6px; }

.ody { position: absolute; left: 32px; right: 31px; top: 22px; bottom: 58px; opacity: .3; background: #fff; display: flex; flex-direction: column; font-size: 12px; }
.o-title { height: 17px; flex: none; display: flex; align-items: center; gap: 7px; color: #333; padding-left: 1px; }
.o-banner { height: 147px; flex: none; border: 5px solid #000; border-top-width: 6px; display: flex; flex-direction: column; font-family: "Liberation Sans", sans-serif; color: #111; }
.o-patient { height: 43px; display: flex; align-items: center; gap: 9px; padding: 0 5px 6px 11px; font-size: 13px; }
.o-patient h1 { font-size: 17px; margin-right: auto; }
.o-patient p i { font-style: italic; margin-right: 2px; }
.o-cards { flex: 1; display: grid; grid-template-columns: 452px 458px 458px 1fr; border-top: 1px solid #000; }
.o-cards div { display: flex; flex-direction: column; border-right: 1px solid #000; }
.o-cards div:last-child { border: 0; }
.o-cards span { height: 21px; padding-left: 6px; line-height: 20px; font-style: italic; }
.o-cards .lbl { border-bottom: 1px solid #000; }
.o-cards .val { padding-left: 5px; }
.o-cards div:last-child span { font-style: normal; font-weight: 700; padding-left: 10px; }
.o-cards div:nth-child(3) .val { font-style: normal; padding-left: 1px; }
.o-cards a { margin-top: auto; align-self: flex-end; color: #20c; text-decoration: none; }
.o-body { flex: 1; display: flex; border: 1px solid #000; border-top: 0; padding: 9px 5px 9px 9px; gap: 14px; color: #3a6297; }
.o-body aside { width: 126px; background: #3a6297; display: flex; flex-direction: column; align-items: center; padding: 4px 7px; gap: 9px; color: #fff; font-size: 13px; }
.emg { width: 112px; height: 28px; background: #6200ee; gap: 5px; }
.lock { width: 110px; height: 24px; background: #fff; color: #3a6297; gap: 7px; }
.ver { margin-top: auto; align-self: stretch; display: flex; flex-direction: column; align-items: flex-end; gap: 8px; font-size: 10px; font-weight: 600; white-space: nowrap; }
.ver strong { font-size: 22px; line-height: 32px; margin-bottom: 2px; }
main { flex: 1; min-width: 0; display: flex; flex-direction: column; }
h2 { font-size: 12px; line-height: 16px; text-align: center; }
.hint { font-size: 11px; margin: -4px 0 8px; }
.panels { display: grid; grid-template-columns: 1fr 1fr; gap: 8px; height: 446px; }
.panel { border: 1px solid #3a6297; padding: 3px; }
.pc { height: 25px; border: 1px solid #333; display: flex; }
.pc input { flex: 1; font-size: 16px; font-style: italic; color: #333; }
.pc button { width: 22px; border: 1px solid #888; }
.cats { display: flex; padding: 10px 0 0 10px; gap: 20px; }
.catlist { width: 131px; display: flex; flex-direction: column; gap: 8px; }
.catlist button { height: 23px; border: 1px solid #3a6297; justify-content: flex-start; padding-left: 3px; font-size: 11px; }
.cats p { flex: 1; text-align: center; font-size: 11px; line-height: 10px; }
.cur { margin-top: 11px; }
.o-foot { margin-top: auto; display: flex; align-items: flex-end; gap: 8px; }
.form { margin-right: auto; width: 272px; margin-left: 10px; font-weight: 600; display: flex; flex-direction: column; gap: 11px; }
.form div { display: flex; justify-content: space-between; align-items: center; width: 262px; }
.form input, .form select { border: 1px solid #7f9cc8; height: 24px; background: #fff; width: 96px; }
.form select { width: 193px; appearance: none; display: block; }
.pick { display: grid; align-items: center; justify-items: end; }
.pick > * { grid-area: 1 / 1; margin-right: 5px; }
.pick select { margin-right: 0; }
.cancel { width: 135px; height: 28px; background: #3a6297; color: #fff; gap: 6px; font-size: 13px; }
.cont { width: 84px; height: 28px; background: #999; color: #bbb; gap: 6px; font-size: 13px; margin-right: 4px; }
.ask { opacity: .3; left: 779px; top: 474px; width: 379px; height: 148px; border-color: #333; }
.ask .d-body { padding-right: 16px; line-height: 13px; }
.cursor { position: absolute; left: 1020px; top: 612px; }
.player { position: absolute; right: 9px; top: 24px; width: 103px; display: flex; flex-direction: column; align-items: flex-end; gap: 4px; font-size: 11px; }
.pbox { width: 103px; height: 40px; border: 1px solid #aaa; border-radius: 3px; background: #f0f0f0; display: flex; align-items: center; padding-left: 3px; gap: 3px; }
.pbox i { width: 1px; height: 34px; background: #aaa; margin: 0 6px 0 0; }
.pbox button { margin-right: 8px; }
.ptip { background: #fff; border: 1px solid #777; width: 57px; height: 38px; display: flex; flex-direction: column; align-items: center; padding: 2px 3px; font-size: 10px; }
.ptip span { width: 100%; text-align: center; line-height: 15px; }
.ptip span:first-child { border-bottom: 1px solid #000; }
</style>
